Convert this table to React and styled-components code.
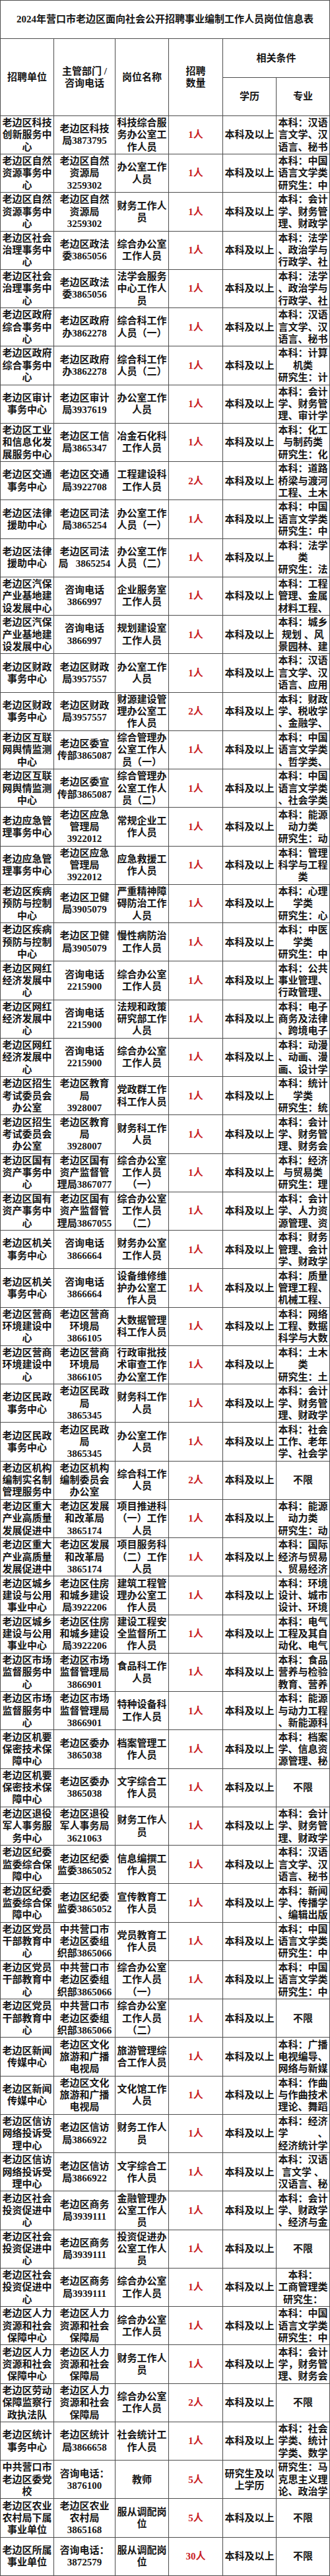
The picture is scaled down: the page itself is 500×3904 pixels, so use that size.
import React from "react";
import styled, { createGlobalStyle } from "styled-components";

const GlobalStyle = createGlobalStyle`
  body {
    margin: 0;
    background: #ffffff;
  }
`;

const Sheet = styled.div`
  display: grid;
  grid-template-columns: 80px 92px 80px 81px 80px 80px;
  grid-template-rows: repeat(67, 1fr);
  gap: 1px;
  padding: 1px;
  width: 500px;
  height: 3904px;
  box-sizing: border-box;
  background: #4d4d4d;
  font-family: "Liberation Serif", "Noto Sans CJK SC", serif;
  font-weight: 700;
  font-size: 15px;
  line-height: 18.3px;
  color: #161616;
`;

const Cell = styled.div`
  background: #ffffff;
  display: flex;
  flex-direction: column;
  justify-content: center;
  align-items: center;
  overflow: hidden;
  text-align: center;
  white-space: pre;
  grid-column: ${(p) => p.$col || "auto"};
  grid-row: ${(p) => p.$row || "auto"};
`;

const Title = styled(Cell)`
  grid-column: 1 / -1;
`;

const Count = styled(Cell)`
  color: #c8201f;
`;

const Line = styled.span`
  display: block;
`;

const Lines = ({ text }) =>
  text.split("|").map((t, i) => <Line key={i}>{t}</Line>);

const U1 = "老边区自然|资源事务中|心";
const D1 = "老边区自然|资源局|3259302";
const U2 = "老边区社会|治理事务中|心";
const D2 = "老边区政法|委3865056";
const U3 = "老边区政府|综合事务中|心";
const D3 = "老边区政府|办3862278";
const U4 = "老边区汽保|产业基地建|设发展中心";
const U5 = "老边区财政|事务中心";
const D5 = "老边区财政|局3957557";
const U6 = "老边区互联|网舆情监测|中心";
const D6 = "老边区委宣|传部3865087";
const U7 = "老边应急管|理事务中心";
const D7 = "老边区应急|管理局|3922012";
const U8 = "老边区疾病|预防与控制|中心";
const D8 = "老边区卫健|局3905079";
const U9 = "老边区网红|经济发展中|心";
const U10 = "老边区招生|考试委员会|办公室";
const D10 = "老边区教育|局|3928007";
const U11 = "老边区国有|资产事务中|心";
const U12 = "老边区机关|事务中心";
const U13 = "老边区营商|环境建设中|心";
const D13 = "老边区营商|环境局|3866105";
const U14 = "老边区民政|事务中心";
const D14 = "老边区民政|局|3865345";
const U15 = "老边区重大|产业高质量|发展促进中";
const D15 = "老边区发展|和改革局|3865174";
const U16 = "老边区城乡|建设与公用|事业中心";
const D16 = "老边区住房|和城乡建设|局3922206";
const U17 = "老边区市场|监督服务中|心";
const D17 = "老边区市场|监督管理局|3866901";
const U18 = "老边区机要|保密技术保|障中心";
const U19 = "老边区纪委|监委综合保|障中心";
const D19 = "老边区纪委|监委3865052";
const U20 = "老边区党员|干部教育中|心";
const D20 = "中共营口市|老边区委组|织部3865066";
const U21 = "老边区新闻|传媒中心";
const D21 = "老边区文化|旅游和广播|电视局";
const U22 = "老边区信访|网络投诉受|理中心";
const D22 = "老边区信访|局3866922";
const U23 = "老边区社会|投资促进中|心";
const D23 = "老边区商务|局3939111";
const D24 = "老边区人力|资源和社会|保障局";
const BK = "本科及以上";
const CN = "本科：中国|语言文学类|研究生：中";
const ACC = "本科：会计|学、财务管|理、财政学";

const rows = [
  ["老边区科技|创新服务中|心", "老边区科技|局3873795", "科技综合服|务办公室工|作人员", "1人", BK, "本科：汉语|言文学、汉|语言、秘书"],
  [U1, D1, "办公室工作|人员", "1人", BK, CN],
  [U1, D1, "财务工作人|员", "1人", BK, ACC],
  [U2, D2, "综合办公室|工作人员", "1人", BK, "本科：法学|、政治学与|行政学、社"],
  [U2, D2, "法学会服务|中心工作人|员", "1人", BK, "本科：法学|、政治学与|行政学、社"],
  [U3, D3, "综合科工作|人员（一）", "1人", BK, "本科：汉语|言文学、汉|语言、秘书"],
  [U3, D3, "综合科工作|人员（二）", "1人", BK, "本科：计算|机类|研究生：计"],
  ["老边区审计|事务中心", "老边区审计|局3937619", "办公室工作|人员", "1人", BK, "本科：会计|学、财务管|理、审计学"],
  ["老边区工业|和信息化发|展服务中心", "老边区工信|局3865347", "冶金石化科|工作人员", "1人", BK, "本科：化工|与制药类|研究生：化"],
  ["老边区交通|事务中心", "老边区交通|局3922708", "工程建设科|工作人员", "2人", BK, "本科：道路|桥梁与渡河|工程、土木"],
  ["老边区法律|援助中心", "老边区司法|局3865254", "办公室工作|人员（一）", "1人", BK, CN],
  ["老边区法律|援助中心", "老边区司法|局   3865254", "办公室工作|人员（二）", "1人", BK, "本科：法学|类|研究生：法"],
  [U4, "咨询电话|3866997", "企业服务室|工作人员", "1人", BK, "本科：工程|管理、金属|材料工程、"],
  [U4, "咨询电话|3866997", "规划建设室|工作人员", "1人", BK, "本科：城乡|规划 、风|景园林、建"],
  [U5, D5, "办公室工作|人员", "1人", BK, "本科：汉语|言文学、汉|语言、应用"],
  [U5, D5, "财源建设管|理办公室工|作人员", "2人", BK, "本科：财政|学、税收学|、金融学、"],
  [U6, D6, "综合管理办|公室工作人|员（一）", "1人", BK, "本科：中国|语言文学类|、哲学类、"],
  [U6, D6, "综合管理办|公室工作人|员（二）", "1人", BK, "本科：中国|语言文学类|、社会学类"],
  [U7, D7, "常规企业工|作人员", "1人", BK, "本科：能源|动力类|研究生：动"],
  [U7, D7, "应急救援工|作人员", "1人", BK, "本科：管理|科学与工程|类"],
  [U8, D8, "严重精神障|碍防治工作|人员", "1人", BK, "本科：心理|学类|研究生：心"],
  [U8, D8, "慢性病防治|工作人员", "1人", BK, "本科：中医|学类|研究生：中"],
  [U9, "咨询电话|2215900", "综合办公室|工作人员", "1人", BK, "本科：公共|事业管理、|行政管理、"],
  [U9, "咨询电话|2215900", "法规和政策|研究部工作|人员", "1人", BK, "本科：电子|商务及法律|、跨境电子"],
  [U9, "咨询电话|2215900", "综合办公室|工作人员", "1人", BK, "本科：动漫|、动画、漫|画、设计学"],
  [U10, D10, "党政群工作|科工作人员", "1人", BK, "本科：统计|学类|研究生：统"],
  [U10, D10, "财务科工作|人员", "1人", BK, "本科：会计|学、财务管|理、财务会"],
  [U11, "老边区国有|资产监督管|理局3867077", "综合办公室|工作人员|（一）", "1人", BK, "本科：经济|与贸易类|研究生：理"],
  [U11, "老边区国有|资产监督管|理局3867055", "综合办公室|工作人员|（二）", "1人", BK, "本科：会计|学、人力资|源管理、资"],
  [U12, "咨询电话|3866664", "财务办公室|工作人员", "1人", BK, "本科：财务|管理、会计|学、财政学"],
  [U12, "咨询电话|3866664", "设备维修维|护办公室工|作人员", "1人", BK, "本科：质量|管理工程、|机械工程、"],
  [U13, D13, "大数据管理|科工作人员", "1人", BK, "本科：网络|工程、数据|科学与大数"],
  [U13, D13, "行政审批技|术审查工作|办公室工作", "1人", BK, "本科：土木|类|研究生：土"],
  [U14, D14, "财务科工作|人员", "1人", BK, ACC],
  [U14, D14, "办公室工作|人员", "1人", BK, "本科：社会|工作、老年|学、社会学"],
  ["老边区机构|编制实名制|管理服务中", "老边区机构|编制委员会|办公室", "综合科工作|人员", "2人", BK, "不限"],
  [U15, D15, "项目推进科|（一）工作|人员", "1人", BK, "本科：能源|动力类|研究生：动"],
  [U15, D15, "项目服务科|（二）工作|人员", "1人", BK, "本科：国际|经济与贸易|、贸易经济"],
  [U16, D16, "建筑工程管|理办公室工|作人员", "1人", BK, "本科：环境|设计、城市|设计、环境"],
  [U16, D16, "建设工程安|全监督所工|作人员", "1人", BK, "本科：电气|工程及其自|动化、电气"],
  [U17, D17, "食品科工作|人员", "1人", BK, "本科：食品|营养与检验|教育、营养"],
  [U17, D17, "特种设备科|工作人员", "1人", BK, "本科：能源|与动力工程|、新能源科"],
  [U18, "老边区委办|3865038", "档案管理工|作人员", "1人", BK, "本科：档案|学、信息资|源管理、秘"],
  [U18, "老边区委办|3865038", "文字综合工|作人员", "1人", BK, "不限"],
  ["老边区退役|军人事务服|务中心", "老边区退役|军人事务局|3621063", "财务工作人|员", "1人", BK, ACC],
  [U19, D19, "信息编撰工|作人员", "1人", BK, "本科：汉语|言文学、汉|语言、秘书"],
  [U19, D19, "宣传教育工|作人员", "1人", BK, "本科：新闻|学、传播学|、编辑出版"],
  [U20, D20, "党员教育工|作人员", "1人", BK, CN],
  [U20, D20, "综合办公室|工作人员|（一）", "1人", BK, CN],
  [U20, D20, "综合办公室|工作人员|（二）", "1人", BK, "不限"],
  [U21, D21, "旅游管理综|合工作人员", "1人", BK, "本科：广播|电视编导、|网络与新媒"],
  [U21, D21, "文化馆工作|人员", "1人", BK, "本科：作曲|与作曲技术|理论、舞蹈"],
  [U22, D22, "财务工作人|员", "1人", BK, "本科：经济|学　　　、|经济统计学"],
  [U22, D22, "文字综合工|作人员", "1人", BK, "本科：汉语|言文学 、|汉语言、秘"],
  [U23, D23, "金融管理办|公室工作人|员", "1人", BK, "本科：会计|学、财政学|、经济与金"],
  [U23, D23, "投资促进办|公室工作人|员", "1人", BK, "不限"],
  [U23, D23, "综合办公室|工作人员", "1人", BK, "本科：|工商管理类|研究生："],
  ["老边区人力|资源和社会|保障中心", D24, "综合办公室|工作人员", "1人", BK, CN],
  ["老边区人力|资源和社会|保障中心", D24, "财务工作人|员", "1人", BK, "本科：会计|学，财务管|理、财务会"],
  ["老边区劳动|保障监察行|政执法队", D24, "综合办公室|工作人员", "2人", BK, "不限"],
  ["老边区统计|事务中心", "老边区统计|局3866658", "社会统计工|作人员", "1人", BK, "本科：社会|学类、统计|学类、数学"],
  ["中共营口市|老边区委党|校", "咨询电话：|3876100", "教师", "5人", "研究生及以|上学历", "研究生：马|克思主义理|论、政治学"],
  ["老边区农业|农村局下属|事业单位", "老边区农业|农村局|3865168", "服从调配岗|位", "5人", BK, "不限"],
  ["老边区所属|事业单位", "咨询电话：|3872579", "服从调配岗|位", "30人", BK, "不限"],
];

export default function App() {
  return (
    <>
      <GlobalStyle />
      <Sheet>
        <Title>2024年营口市老边区面向社会公开招聘事业编制工作人员岗位信息表</Title>
        <Cell $row="span 2">
          <Lines text="招聘单位" />
        </Cell>
        <Cell $row="span 2">
          <Lines text="主管部门 /|咨询电话" />
        </Cell>
        <Cell $row="span 2">
          <Lines text="岗位名称" />
        </Cell>
        <Cell $row="span 2">
          <Lines text="招聘|数量" />
        </Cell>
        <Cell $col="span 2">
          <Lines text="相关条件" />
        </Cell>
        <Cell>
          <Lines text="学历" />
        </Cell>
        <Cell>
          <Lines text="专业" />
        </Cell>
        {rows.map((r, i) => (
          <React.Fragment key={i}>
            <Cell>
              <Lines text={r[0]} />
            </Cell>
            <Cell>
              <Lines text={r[1]} />
            </Cell>
            <Cell>
              <Lines text={r[2]} />
            </Cell>
            <Count>
              <Lines text={r[3]} />
            </Count>
            <Cell>
              <Lines text={r[4]} />
            </Cell>
            <Cell>
              <Lines text={r[5]} />
            </Cell>
          </React.Fragment>
        ))}
      </Sheet>
    </>
  );
}
